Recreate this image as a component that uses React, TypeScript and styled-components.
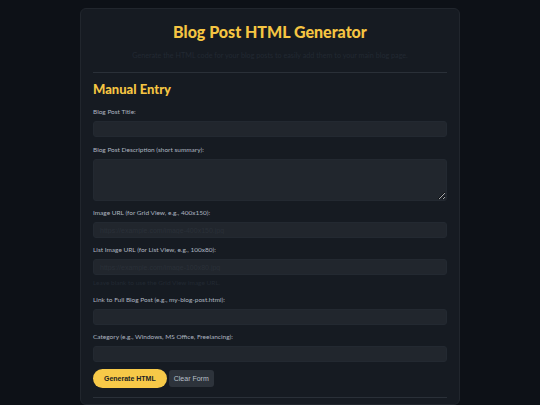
import React, { useState } from "react";
import styled, { createGlobalStyle } from "styled-components";

const GlobalStyle = createGlobalStyle`
  html, body {
    margin: 0;
    padding: 0;
    background: #0d1117;
    font-family: "Lato", "Liberation Sans", sans-serif;
    color: #c9d1d9;
  }
`;

const Page = styled.div`
  display: flex;
  justify-content: center;
  padding-top: 8px;
  min-height: 405px;
  box-sizing: border-box;
`;

const Card = styled.div`
  width: 380px;
  box-sizing: border-box;
  background: #161b22;
  border: 1px solid #21262d;
  border-radius: 6px;
  padding: 12px 12px 0;
`;

const Title = styled.h1`
  margin: 0;
  font-size: 16px;
  font-weight: 900;
  color: #f5c542;
  text-align: center;
  line-height: 22px;
`;

const Subtitle = styled.p`
  margin: 8px 0 0;
  font-size: 7.2px;
  text-align: center;
  color: #222932;
  line-height: 10px;
`;

const Divider = styled.hr<{ $top: number }>`
  border: none;
  border-top: 1px solid #2a3038;
  margin: ${(p) => p.$top}px 0 0;
`;

const SectionTitle = styled.h2`
  margin: 7px 0 0;
  font-size: 13px;
  font-weight: 900;
  color: #f5c542;
  line-height: 18px;
`;

const Form = styled.form`
  display: flex;
  flex-direction: column;
  margin-top: 9px;
`;

const Field = styled.div<{ $gap?: number }>`
  display: flex;
  flex-direction: column;
  margin-bottom: ${(p) => p.$gap ?? 7}px;
`;

const Label = styled.label`
  font-size: 6.5px;
  color: #aeb6c0;
  line-height: 9px;
  margin-bottom: 5px;
`;

const Input = styled.input`
  height: 16px;
  box-sizing: border-box;
  background: #21262d;
  border: 1px solid #232931;
  border-radius: 3px;
  color: #c9d1d9;
  font-size: 7px;
  padding: 0 6px;
  outline: none;
  &::placeholder {
    color: #2a3038;
  }
`;

const TextArea = styled.textarea`
  display: block;
  height: 42px;
  box-sizing: border-box;
  background: #21262d;
  border: 1px solid #232931;
  border-radius: 3px;
  color: #c9d1d9;
  font-size: 7px;
  padding: 4px 6px;
  resize: vertical;
  outline: none;
`;

const Help = styled.small`
  font-size: 6.5px;
  color: #222932;
  line-height: 9px;
  margin-top: 3px;
`;

const Buttons = styled.div`
  display: flex;
  align-items: center;
  gap: 2px;
`;

const PrimaryButton = styled.button`
  height: 19px;
  padding: 0 11px;
  border: none;
  border-radius: 10px;
  background: #f7c948;
  color: #1b1f24;
  font-family: "Liberation Sans", sans-serif;
  font-size: 7px;
  font-weight: 700;
  cursor: pointer;
`;

const SecondaryButton = styled.button`
  height: 17px;
  padding: 0 5px;
  border: none;
  border-radius: 3px;
  background: #2d333b;
  color: #b8c0ca;
  font-family: "Liberation Sans", sans-serif;
  font-size: 7px;
  cursor: pointer;
`;

export default function App() {
  const [title, setTitle] = useState("");

  return (
    <>
      <GlobalStyle />
      <Page>
        <Card>
          <Title>Blog Post HTML Generator</Title>
          <Subtitle>
            Generate the HTML code for your blog posts to easily add them to your main blog page.
          </Subtitle>
          <Divider $top={11} />
          <SectionTitle>Manual Entry</SectionTitle>
          <Form onSubmit={(e) => e.preventDefault()}>
            <Field $gap={8}>
              <Label>Blog Post Title:</Label>
              <Input value={title} onChange={(e) => setTitle(e.target.value)} />
            </Field>
            <Field>
              <Label>Blog Post Description (short summary):</Label>
              <TextArea />
            </Field>
            <Field>
              <Label>Image URL (for Grid View, e.g., 400x150):</Label>
              <Input placeholder="https://example.com/image-400x150.jpg" />
            </Field>
            <Field $gap={8}>
              <Label>List Image URL (for List View, e.g., 100x80):</Label>
              <Input placeholder="https://example.com/image-100x80.jpg" />
              <Help>Leave blank to use the Grid View image URL.</Help>
            </Field>
            <Field>
              <Label>Link to Full Blog Post (e.g., my-blog-post.html):</Label>
              <Input />
            </Field>
            <Field>
              <Label>Category (e.g., Windows, MS Office, Freelancing):</Label>
              <Input />
            </Field>
            <Buttons>
              <PrimaryButton type="submit">Generate HTML</PrimaryButton>
              <SecondaryButton type="button" onClick={() => setTitle("")}>
                Clear Form
              </SecondaryButton>
            </Buttons>
          </Form>
          <Divider $top={9} />
        </Card>
      </Page>
    </>
  );
}
